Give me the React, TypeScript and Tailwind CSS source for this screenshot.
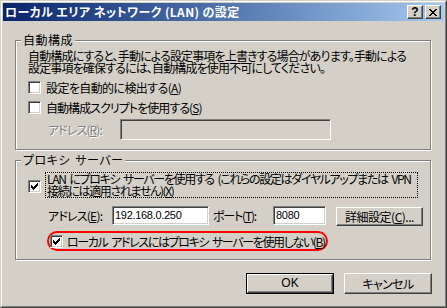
import React from "react";

function Check() {
  return (
    <svg width="7" height="7" viewBox="0 0 7 7" shapeRendering="crispEdges" className="block">
      <path
        fill="#000"
        d="M6 0h1v3h-1zM5 1h1v3h-1zM4 2h1v3h-1zM0 2h1v3h-1zM1 3h1v3h-1zM2 4h1v3h-1zM3 3h1v3h-1z"
      />
    </svg>
  );
}

function Checkbox({ checked }: { checked?: boolean }) {
  return (
    <div className="w-[13px] h-[13px] shrink-0 bg-white border border-t-[#808080] border-l-[#808080] border-r-white border-b-white shadow-[inset_1px_1px_0_#404040,inset_-1px_-1px_0_#D4D0C8] flex items-center justify-center">
      {checked ? <Check /> : null}
    </div>
  );
}

function Sunken({ className, children, disabled }: { className: string; children?: React.ReactNode; disabled?: boolean }) {
  return (
    <div
      className={
        (disabled ? "bg-[#D4D0C8] " : "bg-white ") +
        "shrink-0 border border-t-[#808080] border-l-[#808080] border-r-white border-b-white shadow-[inset_1px_1px_0_#404040,inset_-1px_-1px_0_#D4D0C8] flex items-center pl-[2px] text-[11px] tracking-[-0.3px] font-['Liberation_Sans',sans-serif] " +
        className
      }
    >
      {children}
    </div>
  );
}

function Button({ className, children }: { className: string; children: React.ReactNode }) {
  return (
    <div
      className={
        "shrink-0 bg-[#D4D0C8] border border-t-white border-l-white border-r-[#404040] border-b-[#404040] shadow-[inset_-1px_-1px_0_#808080] flex items-center justify-center " +
        className
      }
    >
      {children}
    </div>
  );
}

function Group({ label, className, children }: { label: string; className: string; children: React.ReactNode }) {
  return (
    <div
      className={
        "relative w-[416px] border border-[#808080] shadow-[inset_1px_1px_0_#fff,1px_1px_0_#fff] pl-[12px] " +
        className
      }
    >
      <span className="absolute left-[5px] top-[-8px] bg-[#D4D0C8] px-[2px] leading-[13px] whitespace-nowrap tracking-[0.5px] [word-spacing:2px]">
        {label}
      </span>
      {children}
    </div>
  );
}

export default function App() {
  return (
    <div className="w-[447px] h-[308px] bg-[#D4D0C8] border border-t-[#D4D0C8] border-l-[#D4D0C8] border-r-[#404040] border-b-[#404040] font-['Noto_Sans_CJK_JP','Liberation_Sans',sans-serif] text-[12px] leading-[13px] text-black [font-feature-settings:'palt'] overflow-hidden">
      <div className="h-full border border-t-white border-l-white border-r-[#808080] border-b-[#808080] p-px flex flex-col">
        {/* Title bar */}
        <div className="h-[18px] shrink-0 flex items-center bg-gradient-to-r from-[#0A246A] to-[#A6CAF0] pl-[2px] pr-[3px]">
          <span className="text-white font-bold text-[12px] leading-[18px] whitespace-nowrap tracking-[0.4px]">
            ローカル エリア ネットワーク (LAN) の設定
          </span>
          <div className="ml-auto flex gap-[2px]">
            <Button className="w-[16px] h-[14px]">
              <span className="font-['Liberation_Sans',sans-serif] font-bold text-[12px] leading-[12px] mt-[-1px]">?</span>
            </Button>
            <Button className="w-[16px] h-[14px]">
              <svg width="8" height="7" viewBox="0 0 8 7" shapeRendering="crispEdges" className="block">
                <path
                  fill="#000"
                  d="M0 0h2v1h-2zM6 0h2v1h-2zM1 1h2v1h-2zM5 1h2v1h-2zM2 2h4v1h-4zM3 3h2v1h-2zM2 4h4v1h-4zM1 5h2v1h-2zM5 5h2v1h-2zM0 6h2v1h-2zM6 6h2v1h-2z"
                />
              </svg>
            </Button>
          </div>
        </div>

        {/* Content */}
        <div className="flex flex-col pl-[12px]">
          <Group label="自動構成" className="mt-[19px] pt-[9px] pb-[9px]">
            <div className="leading-[12px] whitespace-nowrap tracking-[-0.85px]">
              <div className="h-[12px]">自動構成にすると、手動による設定事項を上書きする場合があります。手動による</div>
              <div className="h-[12px]">設定事項を確保するには、自動構成を使用不可にしてください。</div>
            </div>
            <div className="mt-[7px] h-[13px] flex items-center gap-[5px]">
              <Checkbox />
              <span className="whitespace-nowrap tracking-[-0.6px]">
                設定を自動的に検出する(<u>A</u>)
              </span>
            </div>
            <div className="mt-[7px] h-[13px] flex items-center gap-[5px]">
              <Checkbox />
              <span className="whitespace-nowrap tracking-[-0.95px]">
                自動構成スクリプトを使用する(<u>S</u>)
              </span>
            </div>
            <div className="mt-[5px] flex items-center">
              <span className="ml-[20px] w-[72px] whitespace-nowrap tracking-[-0.9px] text-[#808080] [text-shadow:1px_1px_0_#fff]">
                アドレス(<u>R</u>):
              </span>
              <Sunken className="w-[211px] h-[21px]" disabled />
            </div>
          </Group>

          <Group label="プロキシ サーバー" className="mt-[10px] pt-[11px] pb-[8px]">
            <div className="flex items-start">
              <div className="mt-[8px]">
                <Checkbox checked />
              </div>
              <div className="ml-[4px] w-[373px] border border-dotted border-black px-px leading-[12px] whitespace-nowrap tracking-[-1.35px] [word-spacing:2.5px]">
                <div className="h-[12px]">LAN にプロキシ サーバーを使用する (これらの設定はダイヤルアップまたは VPN</div>
                <div className="h-[12px]">
                  接続には適用されません)(<u>X</u>)
                </div>
              </div>
            </div>
            <div className="mt-[8px] h-[20px] flex items-start">
              <span className="ml-[20px] w-[64px] mt-[3px] whitespace-nowrap tracking-[-0.8px]">
                アドレス(<u>E</u>):
              </span>
              <Sunken className="w-[97px] h-[19px]">192.168.0.250</Sunken>
              <span className="w-[64px] pl-[4px] mt-[3px] whitespace-nowrap tracking-[-1.2px]">
                ポート(<u>T</u>):
              </span>
              <Sunken className="w-[53px] h-[19px]">8080</Sunken>
              <Button className="ml-[10px] mt-px w-[87px] h-[19px]">
                <span className="whitespace-nowrap tracking-[-0.5px]">
                  詳細設定(<u>C</u>)...
                </span>
              </Button>
            </div>
            <div className="mt-[5px] ml-[19px] w-[281px] h-[20px] border-2 border-[#FF0000] rounded-[10px] flex items-center pl-px gap-[4px]">
              <Checkbox checked />
              <span className="whitespace-nowrap tracking-[-1.37px] [word-spacing:2.5px]">
                ローカル アドレスにはプロキシ サーバーを使用しない(<u>B</u>)
              </span>
            </div>
          </Group>

          <div className="mt-[13px] flex pl-[231px] gap-[10px]">
            <div className="w-[88px] h-[21px] border border-black flex">
              <Button className="w-full h-full">
                <span className="font-['Liberation_Sans',sans-serif]">OK</span>
              </Button>
            </div>
            <Button className="w-[88px] h-[21px]">
              <span className="tracking-[-0.6px]">キャンセル</span>
            </Button>
          </div>
        </div>
      </div>
    </div>
  );
}
